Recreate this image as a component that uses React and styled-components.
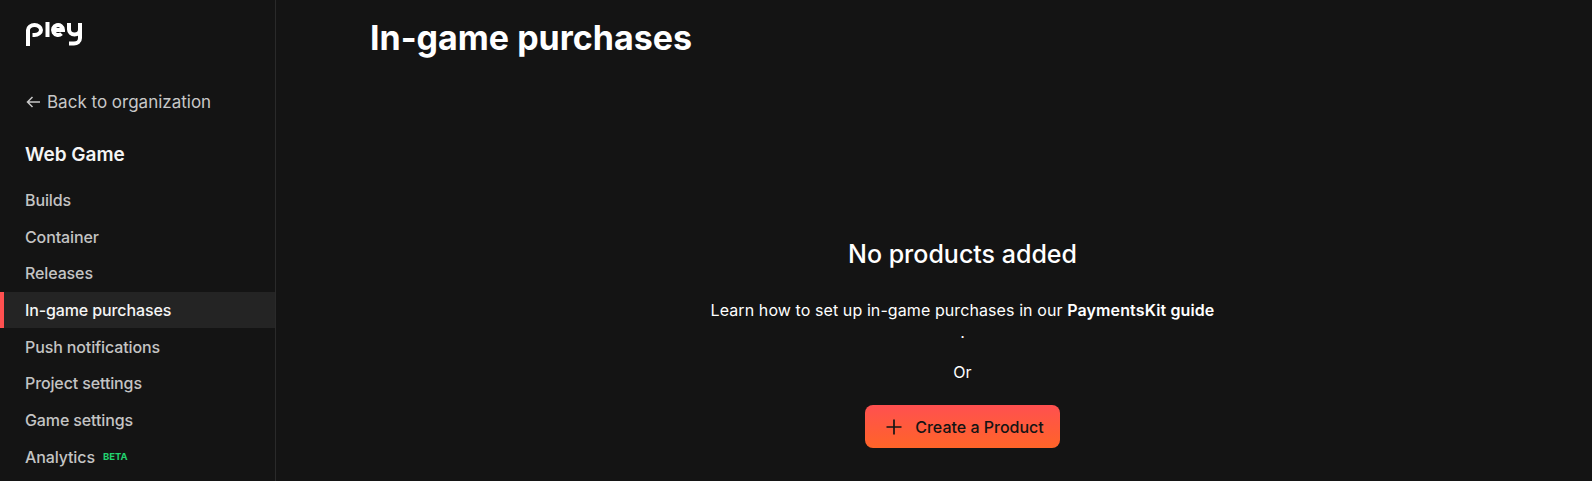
import React from "react";
import styled, { createGlobalStyle } from "styled-components";

const GlobalStyle = createGlobalStyle`
	html, body {
		margin: 0;
		height: 100%;
		overflow: hidden;
		background: #141414;
		font-family: Inter, "Liberation Sans", sans-serif;
	}
`;

const Page = styled.div`
	display: flex;
	height: 481px;
	background: #141414;
	color: #fff;
`;

const Sidebar = styled.aside`
	box-sizing: border-box;
	flex: 0 0 276px;
	border-right: 1px solid #2a2a2a;
	overflow: hidden;
`;

const LogoLink = styled.a`
	display: block;
	height: 24px;
	padding: 22px 0 0 26px;
`;

const BackLink = styled.a`
	display: flex;
	align-items: center;
	gap: 7px;
	margin: 44px 0 0 26px;
	height: 24px;
	color: #c8c8c8;
	font-size: 17px;
	font-weight: 400;
`;

const ProjectName = styled.h2`
	margin: 29px 0 0 25px;
	height: 24px;
	font-size: 19px;
	line-height: 24px;
	font-weight: 600;
	color: #f5f5f5;
`;

const NavList = styled.ul`
	list-style: none;
	margin: 14.5px 0 0;
	padding: 0;
`;

const NavItem = styled.li`
	box-sizing: border-box;
	display: flex;
	align-items: center;
	gap: 8px;
	height: 36.7px;
	padding-left: ${(p) => (p.$active ? "21px" : "25px")};
	border-left: ${(p) => (p.$active ? "4px solid #ff5050" : "none")};
	background: ${(p) => (p.$active ? "#242424" : "transparent")};
	color: ${(p) => (p.$active ? "#f5f5f5" : "#c4c4c4")};
	font-size: 16px;
	font-weight: 500;
	letter-spacing: -0.12px;
`;

const BetaTag = styled.span`
	color: #22d36f;
	font-size: 9.5px;
	font-weight: 700;
	letter-spacing: 0;
`;

const Main = styled.main`
	flex: 1;
	display: flex;
	flex-direction: column;
	padding: 0 37px 0 94px;
`;

const Title = styled.h1`
	margin: 16px 0 0;
	font-size: 34px;
	line-height: 44px;
	font-weight: 700;
`;

const EmptyState = styled.section`
	display: flex;
	flex-direction: column;
	align-items: center;
	margin-top: 177px;
	text-align: center;
`;

const EmptyTitle = styled.h3`
	margin: 0;
	font-size: 25px;
	line-height: 34px;
	font-weight: 500;
`;

const Guide = styled.p`
	margin: 28px 0 0;
	width: 510px;
	font-size: 16px;
	line-height: 22px;
	font-weight: 400;
	letter-spacing: 0.09px;
`;

const GuideLink = styled.a`
	font-weight: 600;
	letter-spacing: 0.12px;
`;

const OrText = styled.p`
	margin: 17px 0 0;
	font-size: 16px;
	line-height: 24px;
`;

const CreateButton = styled.button`
	display: flex;
	align-items: center;
	justify-content: center;
	gap: 12px;
	width: 195px;
	height: 43px;
	margin-top: 21px;
	padding: 0 0 0 4px;
	border: 0;
	border-radius: 8px;
	background: linear-gradient(180deg, #ff5050, #ff6428);
	color: #141414;
	font-family: inherit;
	font-size: 16px;
	font-weight: 500;
`;

function PleyLogo() {
	return (
		<svg width="57" height="25" viewBox="0 0 57 25" fill="none" stroke="#fff" strokeWidth="4" aria-label="pley">
			<path d="M2 24V8a6.5 5 0 1 1 6.5 5h-2" />
			<path d="M21.5 0v15" />
			<path d="M27 8h10a5 5 0 1 0-1.5 3.6" />
			<path d="M43 1v6.5a5.5 5 0 0 0 11 0V1" />
			<path d="M54 7v9c0 4-3 5.5-6 5.5h-5" />
		</svg>
	);
}

function BackArrow() {
	return (
		<svg width="14" height="12" viewBox="0 0 14 12" fill="none" stroke="currentColor" strokeWidth="1.5">
			<path d="M6.5 1 1.5 6l5 5M1.5 6H14" />
		</svg>
	);
}

function PlusIcon() {
	return (
		<svg width="18" height="18" viewBox="0 0 18 18" fill="none" stroke="currentColor" strokeWidth="1.7">
			<path d="M9 1.5v15M1.5 9h15" />
		</svg>
	);
}

const navItems = [
	"Builds",
	"Container",
	"Releases",
	"In-game purchases",
	"Push notifications",
	"Project settings",
	"Game settings",
];

function App() {
	return (
		<Page>
			<GlobalStyle />
			<Sidebar>
				<LogoLink>
					<PleyLogo />
				</LogoLink>
				<BackLink>
					<BackArrow />
					Back to organization
				</BackLink>
				<ProjectName>Web Game</ProjectName>
				<NavList>
					{navItems.map((item) => (
						<NavItem key={item} $active={item === "In-game purchases"}>
							{item}
						</NavItem>
					))}
					<NavItem>
						Analytics
						<BetaTag>BETA</BetaTag>
					</NavItem>
				</NavList>
			</Sidebar>
			<Main>
				<Title>In-game purchases</Title>
				<EmptyState>
					<EmptyTitle>No products added</EmptyTitle>
					<Guide>
						Learn how to set up in-game purchases in our <GuideLink>PaymentsKit guide</GuideLink> .
					</Guide>
					<OrText>Or</OrText>
					<CreateButton>
						<PlusIcon />
						Create a Product
					</CreateButton>
				</EmptyState>
			</Main>
		</Page>
	);
}

export default App;
